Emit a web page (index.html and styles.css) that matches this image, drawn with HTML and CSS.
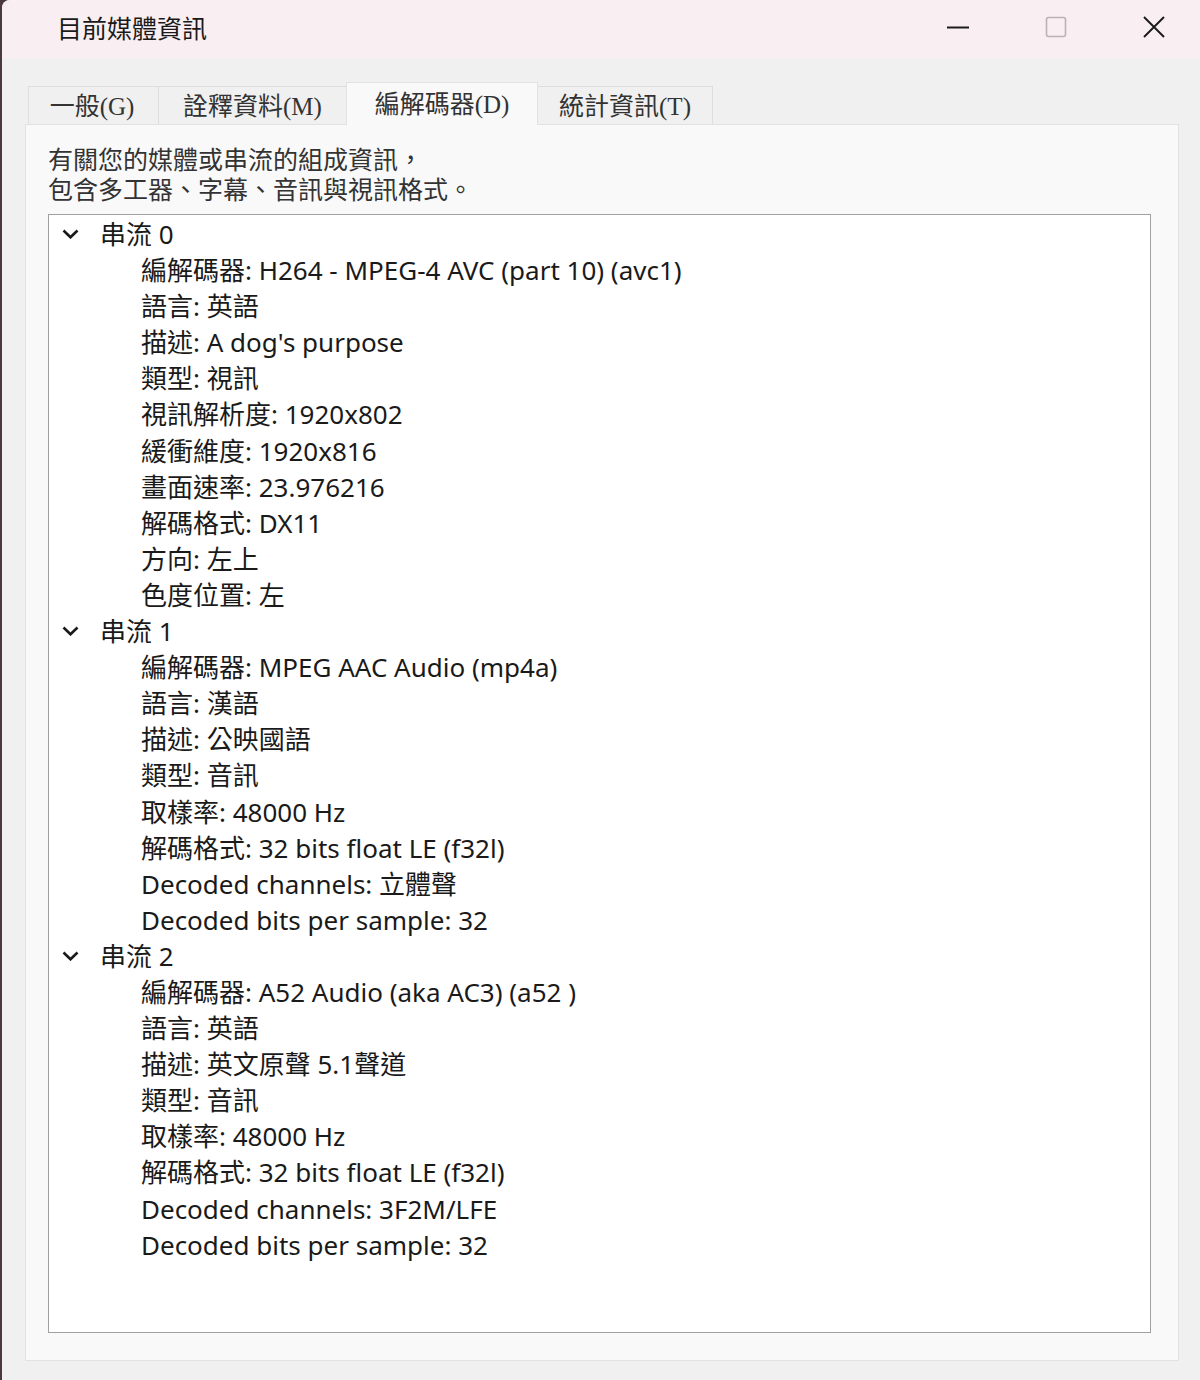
FILE: index.html
```html
<!DOCTYPE html>
<html lang="zh-Hant">
<head>
<meta charset="utf-8">
<title>目前媒體資訊</title>
<link rel="stylesheet" href="styles.css">
</head>
<body>
<div class="window">
  <div class="titlebar">
    <div class="title">目前媒體資訊</div>
    <div class="controls">
      <span class="ctl">
        <svg width="24" height="24" viewBox="0 0 24 24"><path d="M1 12.5H23" stroke="#1a1a1a" stroke-width="2"/></svg>
      </span>
      <span class="ctl">
        <svg width="24" height="24" viewBox="0 0 24 24"><rect x="2.5" y="2.5" width="19" height="19" rx="2" fill="none" stroke="#b9b3b5" stroke-width="1.6"/></svg>
      </span>
      <span class="ctl">
        <svg width="24" height="24" viewBox="0 0 24 24"><path d="M2 2L22 22M22 2L2 22" stroke="#1a1a1a" stroke-width="1.9"/></svg>
      </span>
    </div>
  </div>
  <div class="client">
    <div class="tabs">
      <div class="tab t1">一般(G)</div>
      <div class="tab t2">詮釋資料(M)</div>
      <div class="tab t3 active">編解碼器(D)</div>
      <div class="tab t4">統計資訊(T)</div>
    </div>
    <div class="panel">
      <div class="desc">
        <p class="line">有關您的媒體或串流的組成資訊，</p>
        <p class="line">包含多工器、字幕、音訊與視訊格式。</p>
      </div>
      <div class="tree">
        <div class="node"><svg class="chev" width="17" height="10" viewBox="0 0 17 10"><path d="M1.5 1.5L8.5 8.3L15.5 1.5" fill="none" stroke="#1a1a1a" stroke-width="2.6"/></svg><span>串流 0</span></div>
        <div class="leaf">編解碼器: H264 - MPEG-4 AVC (part 10) (avc1)</div>
        <div class="leaf">語言: 英語</div>
        <div class="leaf">描述: A dog's purpose</div>
        <div class="leaf">類型: 視訊</div>
        <div class="leaf">視訊解析度: 1920x802</div>
        <div class="leaf">緩衝維度: 1920x816</div>
        <div class="leaf">畫面速率: 23.976216</div>
        <div class="leaf">解碼格式: DX11</div>
        <div class="leaf">方向: 左上</div>
        <div class="leaf">色度位置: 左</div>
        <div class="node"><svg class="chev" width="17" height="10" viewBox="0 0 17 10"><path d="M1.5 1.5L8.5 8.3L15.5 1.5" fill="none" stroke="#1a1a1a" stroke-width="2.6"/></svg><span>串流 1</span></div>
        <div class="leaf">編解碼器: MPEG AAC Audio (mp4a)</div>
        <div class="leaf">語言: 漢語</div>
        <div class="leaf">描述: 公映國語</div>
        <div class="leaf">類型: 音訊</div>
        <div class="leaf">取樣率: 48000 Hz</div>
        <div class="leaf">解碼格式: 32 bits float LE (f32l)</div>
        <div class="leaf">Decoded channels: 立體聲</div>
        <div class="leaf">Decoded bits per sample: 32</div>
        <div class="node"><svg class="chev" width="17" height="10" viewBox="0 0 17 10"><path d="M1.5 1.5L8.5 8.3L15.5 1.5" fill="none" stroke="#1a1a1a" stroke-width="2.6"/></svg><span>串流 2</span></div>
        <div class="leaf">編解碼器: A52 Audio (aka AC3) (a52 )</div>
        <div class="leaf">語言: 英語</div>
        <div class="leaf">描述: 英文原聲 5.1聲道</div>
        <div class="leaf">類型: 音訊</div>
        <div class="leaf">取樣率: 48000 Hz</div>
        <div class="leaf">解碼格式: 32 bits float LE (f32l)</div>
        <div class="leaf">Decoded channels: 3F2M/LFE</div>
        <div class="leaf">Decoded bits per sample: 32</div>
      </div>
    </div>
  </div>
</div>
</body>
</html>
```

FILE: styles.css
```css
html, body {
  margin: 0;
  padding: 0;
}
body {
  width: 1200px;
  height: 1380px;
  background: #4a3840;
  overflow: hidden;
  font-family: "Noto Sans", "Noto Sans CJK TC", sans-serif;
  color: #1a1a1a;
}
.window {
  margin-left: 2px;
  height: 1380px;
  background: #f0f0f0;
  border-top-left-radius: 8px;
  overflow: hidden;
  display: flex;
  flex-direction: column;
}
.titlebar {
  height: 58px;
  flex: none;
  background: #f9eef1;
  display: flex;
  align-items: center;
  justify-content: space-between;
}
.title {
  margin-left: 55px;
  margin-top: -5px;
  font-family: "Noto Sans CJK TC", sans-serif;
  font-size: 25px;
  color: #1a1a1a;
}
.controls {
  display: flex;
  align-items: center;
  margin-top: -4px;
  margin-right: 34px;
  gap: 74px;
}
.ctl {
  display: flex;
  width: 24px;
  height: 24px;
}
.client {
  flex: 1;
  display: flex;
  flex-direction: column;
  padding: 24px 21px 19px 23px;
}
.tabs {
  display: flex;
  align-items: flex-end;
  height: 42px;
  padding-left: 3px;
  flex: none;
}
.tab {
  box-sizing: border-box;
  height: 38px;
  display: flex;
  align-items: center;
  justify-content: center;
  font-family: "Liberation Serif", "Noto Sans CJK TC", serif;
  font-size: 25px;
  color: #333;
  background: #f0f0f0;
  border: 1px solid #dedede;
  border-bottom: none;
  margin-right: -1px;
  padding-bottom: 3px;
}
.t1 { width: 131px; padding-right: 3px; }
.t2 { width: 189px; }
.t3 { width: 192px; }
.t4 { width: 176px; }
.tab.active {
  background: #f9f9f9;
  border-color: #e2e2e2;
  padding-bottom: 5px;
  position: relative;
  z-index: 1;
  margin-bottom: -1px;
  height: 43px;
}
.panel {
  flex: 1;
  background: #f9f9f9;
  border: 1px solid #e2e2e2;
  padding: 19px 27px 27px 22px;
  display: flex;
  flex-direction: column;
}
.desc {
  margin: 0 0 11px 0;
  display: flex;
  flex-direction: column;
}
.line {
  margin: 0;
  font-family: "Noto Sans CJK TC", sans-serif;
  font-size: 25px;
  line-height: 29.5px;
  height: 29.5px;
  color: #333;
}
.tree {
  flex: 1;
  background: #fff;
  border: 1px solid #a0a0a0;
  padding-top: 1px;
  font-size: 26px;
  line-height: 36.1px;
}
.node {
  display: flex;
  align-items: center;
  height: 36.1px;
  white-space: nowrap;
}
.chev {
  margin-left: 13px;
  margin-right: 21px;
  flex: none;
}
.leaf {
  height: 36.1px;
  padding-left: 92px;
  white-space: nowrap;
}
```
